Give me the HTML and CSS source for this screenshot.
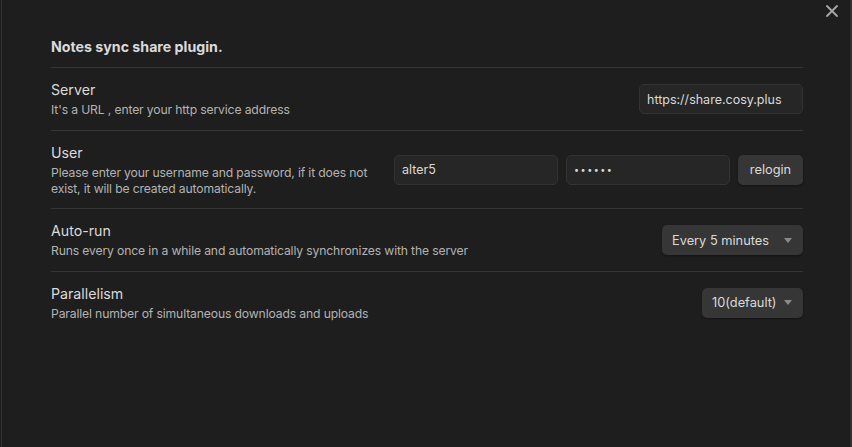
FILE: index.html
```html
<!DOCTYPE html>
<html>
<head>
<meta charset="utf-8">
<link rel="stylesheet" href="styles.css">
</head>
<body>
<div class="modal">
  <button class="close" aria-label="Close">
    <svg width="14" height="14" viewBox="0 0 14 14"><path d="M2 2L12 12M12 2L2 12" stroke="#a8a8a8" stroke-width="1.8" stroke-linecap="round"/></svg>
  </button>
  <div class="content">
    <div class="heading">Notes sync share plugin.</div>
    <div class="item">
      <div class="info">
        <div class="name">Server</div>
        <div class="desc">It's a URL , enter your http service address</div>
      </div>
      <div class="control">
        <input class="text w164" type="text" value="https://share.cosy.plus">
      </div>
    </div>
    <div class="item">
      <div class="info">
        <div class="name">User</div>
        <div class="desc">Please enter your username and password, if it does not exist, it will be created automatically.</div>
      </div>
      <div class="control">
        <input class="text w164" type="text" value="alter5">
        <input class="text w164 pass" type="password" value="123456">
        <button class="btn">relogin</button>
      </div>
    </div>
    <div class="item">
      <div class="info">
        <div class="name">Auto-run</div>
        <div class="desc">Runs every once in a while and automatically synchronizes with the server</div>
      </div>
      <div class="control">
        <div class="dropdown w141"><span>Every 5 minutes</span><i class="arrow"></i></div>
      </div>
    </div>
    <div class="item">
      <div class="info">
        <div class="name">Parallelism</div>
        <div class="desc">Parallel number of simultaneous downloads and uploads</div>
      </div>
      <div class="control">
        <div class="dropdown w101"><span>10(default)</span><i class="arrow"></i></div>
      </div>
    </div>
  </div>
</div>
</body>
</html>
```

FILE: styles.css
```css
html, body {
  margin: 0;
  padding: 0;
  height: 100%;
  background: #1e1e1e;
}
body {
  font-family: "Inter", "Roboto", sans-serif;
  color: #dadada;
}
.modal {
  position: relative;
  height: 100%;
  box-sizing: border-box;
  margin-left: 1px;
  border-left: 1px solid #333333;
  border-right: 2px solid #2f2f2f;
}
.close {
  position: absolute;
  top: 2px;
  right: 9px;
  width: 18px;
  height: 18px;
  padding: 0;
  border: none;
  background: transparent;
  display: flex;
  align-items: center;
  justify-content: center;
}
.content {
  padding: 24px 47px 0 49px;
}
.heading {
  font-size: 14.2px;
  font-weight: 700;
  line-height: 19px;
  padding: 13px 0 11px;
}
.item {
  display: flex;
  align-items: center;
  border-top: 1px solid #363636;
  padding: 12px 0 11.5px;
}
.info {
  flex: 1 1 auto;
  margin-right: 16px;
}
.name {
  font-size: 14.2px;
  line-height: 19px;
  color: #dadada;
}
.desc {
  font-size: 12.2px;
  letter-spacing: -0.15px;
  line-height: 16px;
  color: #b3b3b3;
  padding-top: 3px;
}
.control {
  display: flex;
  gap: 8px;
  align-items: center;
  flex: 0 0 auto;
}
.text {
  box-sizing: border-box;
  height: 30px;
  background: #262626;
  border: 1px solid #333333;
  border-radius: 5px;
  color: #dadada;
  font-family: "Inter", "Roboto", sans-serif;
  font-size: 12.5px;
  padding: 0 7px;
  outline: none;
}
.pass {
  font-size: 9px;
  letter-spacing: 1.5px;
}
.w164 { width: 164px; }
.w141 { width: 141px; }
.w101 { width: 101px; }
.btn {
  box-sizing: border-box;
  height: 30px;
  width: 65px;
  background: #363636;
  border: none;
  border-radius: 5px;
  color: #dadada;
  font-family: "Inter", "Roboto", sans-serif;
  font-size: 12.8px;
  box-shadow: 0 1px 2px rgba(0,0,0,0.4);
}
.dropdown {
  box-sizing: border-box;
  height: 30px;
  background: #363636;
  border-radius: 5px;
  box-shadow: 0 1px 2px rgba(0,0,0,0.4);
  display: flex;
  align-items: center;
  justify-content: space-between;
  padding: 0 11px 0 10px;
  font-size: 12.8px;
  color: #dadada;
}
.arrow {
  width: 0;
  height: 0;
  border-left: 4.5px solid transparent;
  border-right: 4.5px solid transparent;
  border-top: 5px solid #8a8a8a;
}
```
